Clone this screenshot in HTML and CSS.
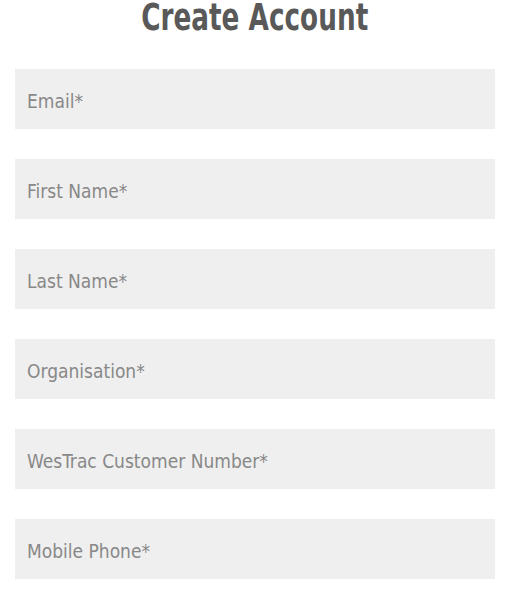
FILE: index.html
```html
<!DOCTYPE html>
<html>
<head>
<meta charset="utf-8">
<link rel="stylesheet" href="styles.css">
</head>
<body>
<div class="page">
  <h1 class="title"><span class="title-text">Create Account</span></h1>
  <form class="form">
    <input class="field" type="email" placeholder="Email*">
    <input class="field" type="text" placeholder="First Name*">
    <input class="field" type="text" placeholder="Last Name*">
    <input class="field" type="text" placeholder="Organisation*">
    <input class="field" type="text" placeholder="WesTrac Customer Number*">
    <input class="field" type="tel" placeholder="Mobile Phone*">
  </form>
</div>
</body>
</html>
```

FILE: styles.css
```css
html, body {
  margin: 0;
  padding: 0;
  background: #ffffff;
}
body {
  font-family: "DejaVu Sans Condensed", "Liberation Sans Narrow", "Liberation Sans", sans-serif;
}
.page {
  padding: 0 16px 0 15px;
}
.title {
  margin: 0;
  height: 39px;
  text-align: center;
  font-size: 37px;
  line-height: 35px;
  font-weight: bold;
  color: #595959;
}
.title-text {
  display: inline-block;
  transform: scaleX(0.79);
  transform-origin: center;
}
.form {
  display: flex;
  flex-direction: column;
  gap: 30px;
  margin-top: 30px;
}
.field {
  display: block;
  box-sizing: border-box;
  width: 480px;
  height: 60px;
  margin: 0;
  padding: 4px 12px 0;
  border: none;
  outline: none;
  background: #efefef;
  font-family: inherit;
  font-size: 19px;
  color: #555;
}
.field::placeholder {
  color: #888888;
  opacity: 1;
}
```
